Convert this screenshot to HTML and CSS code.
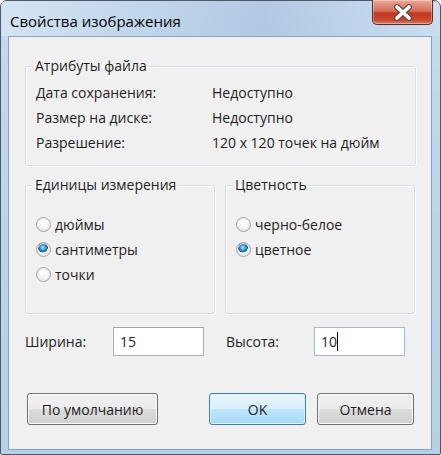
FILE: index.html
```html
<!DOCTYPE html>
<html lang="ru">
<head>
    <meta charset="UTF-8">
    <title>Свойства изображения</title>
    <link rel="stylesheet" href="styles.css">
</head>
<body>
    <div class="window">
        <div class="titlebar">
            <span class="title">Свойства изображения</span>
            <span class="close">
                <svg width="28" height="17" viewBox="0 0 28 17">
                    <path d="M8 3 L20 14 M20 3 L8 14" stroke="#6a4a44" stroke-width="6" stroke-linecap="round"/>
                    <path d="M8 3 L20 14 M20 3 L8 14" stroke="#ffffff" stroke-width="3.6" stroke-linecap="round"/>
                </svg>
            </span>
        </div>

        <div class="client">
            <fieldset class="group attrs">
                <legend>Атрибуты файла</legend>
                <div class="row"><span class="key">Дата сохранения:</span><span>Недоступно</span></div>
                <div class="row"><span class="key">Размер на диске:</span><span>Недоступно</span></div>
                <div class="row"><span class="key">Разрешение:</span><span>120 x 120 точек на дюйм</span></div>
            </fieldset>

            <div class="pair">
                <fieldset class="group choices">
                    <legend>Единицы измерения</legend>
                    <label class="radio"><input type="radio" name="units"> дюймы</label>
                    <label class="radio"><input type="radio" name="units" checked> сантиметры</label>
                    <label class="radio"><input type="radio" name="units"> точки</label>
                </fieldset>
                <fieldset class="group choices">
                    <legend>Цветность</legend>
                    <label class="radio"><input type="radio" name="color"> черно-белое</label>
                    <label class="radio"><input type="radio" name="color" checked> цветное</label>
                </fieldset>
            </div>

            <div class="sizes">
                <div class="field">
                    <span class="field-label">Ширина:</span>
                    <div class="box">15</div>
                </div>
                <div class="field">
                    <span class="field-label">Высота:</span>
                    <div class="box focused">10<span class="caret"></span></div>
                </div>
            </div>

            <div class="buttons">
                <button class="btn wide">По умолчанию</button>
                <button class="btn default">OK</button>
                <button class="btn">Отмена</button>
            </div>
        </div>
    </div>
</body>
</html>
```

FILE: styles.css
```css
* {
    box-sizing: border-box;
}

body {
    margin: 0;
    background: #ffffff;
    font-family: "Open Sans", "Noto Sans", sans-serif;
    font-size: 14px;
    color: #1e1e1e;
}

/* window frame (aero glass) */
.window {
    width: 441px;
    height: 455px;
    border: 1px solid #4d5966;
    border-radius: 7px 7px 2px 2px;
    background: linear-gradient(to bottom, #c6dbf0 0%, #bcd4ec 40%, #b7d0ea 100%);
    display: flex;
    flex-direction: column;
    padding: 0 8px 4px 7px;
}

.titlebar {
    height: 35px;
    display: flex;
    justify-content: space-between;
    align-items: flex-start;
    background: linear-gradient(to right, rgba(255,255,255,0.25), rgba(140,170,205,0.35) 60%, rgba(255,255,255,0.1));
    margin: 0 -8px 0 -7px;
    padding: 0 7px 0 9px;
}

.title {
    font-size: 15px;
    line-height: 20px;
    margin-top: 10px;
    color: #000;
}

.close {
    width: 61px;
    height: 25px;
    margin-top: -1px;
    border: 1px solid #5e2a22;
    border-top: 0;
    border-radius: 0 0 5px 5px;
    background: linear-gradient(to bottom, #e9a99b 0%, #d4705c 45%, #c2381f 55%, #c94a30 85%, #d9826c 100%);
    box-shadow: inset 0 0 0 1px rgba(255,255,255,0.35);
    display: flex;
    align-items: center;
    justify-content: center;
}

/* client area */
.client {
    flex: 1;
    background: #f0f0f0;
    border: 1px solid #8aa2bb;
    padding: 19px 15px 0 16px;
    display: flex;
    flex-direction: column;
}

.group {
    margin: 0;
    border: 1px solid #d5dfe5;
    border-radius: 3px;
    box-shadow: inset 1px 1px 0 #fff, 1px 1px 0 #fff;
    padding: 0 10px;
}

.group legend {
    padding: 0 2px;
    margin-left: -3px;
    line-height: 20px;
    font-size: 14px;
}

.attrs {
    padding-top: 4px;
    padding-bottom: 10px;
}

.row {
    display: flex;
    line-height: 25px;
}

.key {
    width: 176px;
}

.pair {
    display: grid;
    grid-template-columns: 190px 190px;
    gap: 10px;
    margin-top: 9px;
}

.choices {
    display: flex;
    flex-direction: column;
    padding-top: 17px;
    padding-bottom: 26px;
}

.radio {
    display: flex;
    align-items: center;
    height: 25px;
    gap: 4px;
}

/* win7 style radio */
input[type="radio"] {
    -webkit-appearance: none;
    appearance: none;
    margin: 0;
    width: 15px;
    height: 15px;
    border-radius: 50%;
    border: 1px solid #a4a4a4;
    background: radial-gradient(circle at 50% 35%, #ffffff 0%, #f6f6f6 45%, #dadada 100%);
    box-shadow: inset 0 0 0 1px #ececec;
}

input[type="radio"]:checked {
    background:
        radial-gradient(circle at 45% 35%, #bfe8ff 0%, #3d9fd8 22%, #1b5d97 42%, transparent 46%),
        radial-gradient(circle at 50% 35%, #ffffff 0%, #f6f6f6 45%, #dadada 100%);
}

/* width / height inputs */
.sizes {
    display: flex;
    gap: 22px;
    margin-top: 13px;
}

.field {
    display: flex;
    align-items: center;
}

.field-label {
    width: 88px;
}

.box {
    width: 91px;
    height: 29px;
    border: 1px solid #abadb3;
    border-top-color: #a2a4a9;
    background: #fff;
    padding-left: 6px;
    line-height: 27px;
}

.box.focused {
    border-color: #9ebcd8;
}

.caret {
    display: inline-block;
    width: 1px;
    height: 19px;
    background: #000;
    vertical-align: -4px;
}

/* buttons */
.buttons {
    display: flex;
    gap: 11px;
    margin-top: 37px;
    padding-left: 2px;
}

.btn {
    font-family: inherit;
    font-size: 14px;
    color: #1e1e1e;
    width: 97px;
    height: 32px;
    border: 1px solid #707070;
    border-radius: 3px;
    background: linear-gradient(to bottom, #f2f2f2 0%, #ebebeb 49%, #dddddd 51%, #cfcfcf 100%);
    box-shadow: inset 0 0 0 1px #fbfbfb;
    padding: 0;
}

.btn.wide {
    width: 131px;
    margin-right: 40px;
}

.btn.default {
    border-color: #3c7fb1;
    background: linear-gradient(to bottom, #eaf6fd 0%, #d9f0fc 49%, #bee6fd 51%, #a7d9f5 100%);
    box-shadow: inset 0 0 0 1px #e0f3fc;
}
```
